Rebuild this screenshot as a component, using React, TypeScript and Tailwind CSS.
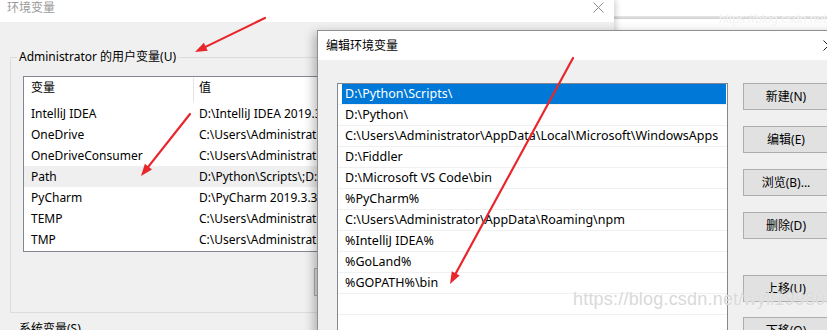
import React from 'react';

const userVars = [
  { name: 'IntelliJ IDEA', value: 'D:\\IntelliJ IDEA 2019.3.3\\bin;' },
  { name: 'OneDrive', value: 'C:\\Users\\Administrator\\OneDrive' },
  { name: 'OneDriveConsumer', value: 'C:\\Users\\Administrator\\OneDrive' },
  { name: 'Path', value: 'D:\\Python\\Scripts\\;D:\\Python\\;C:\\Users', active: true },
  { name: 'PyCharm', value: 'D:\\PyCharm 2019.3.3\\bin;' },
  { name: 'TEMP', value: 'C:\\Users\\Administrator\\AppData\\Local\\Temp' },
  { name: 'TMP', value: 'C:\\Users\\Administrator\\AppData\\Local\\Temp' },
];

const paths = [
  'D:\\Python\\Scripts\\',
  'D:\\Python\\',
  'C:\\Users\\Administrator\\AppData\\Local\\Microsoft\\WindowsApps',
  'D:\\Fiddler',
  'D:\\Microsoft VS Code\\bin',
  '%PyCharm%',
  'C:\\Users\\Administrator\\AppData\\Roaming\\npm',
  '%IntelliJ IDEA%',
  '%GoLand%',
  '%GOPATH%\\bin',
  '',
  '',
];

const font = 'font-["Noto_Sans","Noto_Sans_CJK_SC",sans-serif]';

function CloseIcon({ color }: { color: string }) {
  return (
    <svg width="11" height="11" viewBox="0 0 11 11">
      <path d="M0.5 0.5 L10.5 10.5 M10.5 0.5 L0.5 10.5" stroke={color} strokeWidth="1" fill="none" />
    </svg>
  );
}

function WinButton({ label, className = '' }: { label: string; className?: string }) {
  return (
    <div
      className={`flex h-[27px] w-[86px] shrink-0 items-center justify-center border border-[#adadad] bg-[#e1e1e1] text-[12px] text-black ${className}`}
    >
      {label}
    </div>
  );
}

// red annotation arrow: line + filled head at the end point
function Arrow({ x1, y1, x2, y2 }: { x1: number; y1: number; x2: number; y2: number }) {
  const dx = x2 - x1;
  const dy = y2 - y1;
  const len = Math.hypot(dx, dy);
  const ux = dx / len;
  const uy = dy / len;
  const bx = x2 - ux * 12;
  const by = y2 - uy * 12;
  const head = `${x2},${y2} ${bx - uy * 4.5},${by + ux * 4.5} ${bx + uy * 4.5},${by - ux * 4.5}`;
  return (
    <g>
      <line x1={x1} y1={y1} x2={bx + ux * 2} y2={by + uy * 2} stroke="#e8262b" strokeWidth="2.2" strokeLinecap="round" />
      <polygon points={head} fill="#e8262b" />
    </g>
  );
}

export default function App() {
  return (
    <div className={`relative h-[330px] w-[827px] overflow-hidden bg-white ${font}`}>
      {/* window further behind, top right */}
      <div className="absolute left-[614px] top-0 h-[30px] w-[213px] bg-white pt-[16px]">
        <div className="h-[3px] bg-gradient-to-b from-[#e6e6e6] to-[#cfcfcf]" />
      </div>

      {/* 环境变量 window */}
      <div className="absolute left-0 top-0 flex h-[330px] w-[614px] flex-col overflow-hidden bg-[#f0f0f0] shadow-[2px_0_6px_rgba(0,0,0,0.18)]">
        <div className="flex h-[22px] shrink-0 items-start justify-between bg-white pl-[7px] pr-[10px]">
          <span className="pt-[1px] text-[12px] leading-[14px] text-[#9a9a9a]">环境变量</span>
          <div className="pt-[2px]">
            <CloseIcon color="#8c8c8c" />
          </div>
        </div>

        <div className="shrink-0 pl-[10px] pt-[35px]">
          <div className="relative h-[256px] w-[594px] border border-[#dcdcdc]">
            <span className="absolute left-[6px] top-[-10px] bg-[#f0f0f0] px-[2px] text-[12px] leading-[18px] text-black">
              Administrator 的用户变量(U)
            </span>

            <div className="ml-[12px] mt-[18px] h-[176px] w-[420px] overflow-hidden border border-[#828790] bg-white text-[12px] text-black">
              <div className="flex h-[26px]">
                <div className="w-[169px] shrink-0 pl-[7px] pt-[3px] leading-[16px]">变量</div>
                <div className="my-[1px] w-px shrink-0 bg-[#e5e5e5]" />
                <div className="pl-[5px] pt-[3px] leading-[16px]">值</div>
              </div>
              {userVars.map((v) => (
                <div key={v.name} className={`flex h-[21px] items-center ${v.active ? 'bg-[#efefef]' : ''}`}>
                  <div className="w-[170px] shrink-0 whitespace-nowrap pl-[7px]">{v.name}</div>
                  <div className="shrink-0 whitespace-nowrap pl-[5px]">{v.value}</div>
                </div>
              ))}
            </div>

            <div className="ml-[303px] mt-[16px]">
              <WinButton label="新建(W)..." className="h-[28px] w-[75px]" />
            </div>
          </div>

          <div className="ml-[9px] mt-[8px] text-[12px] leading-[16px] text-black">系统变量(S)</div>
        </div>
      </div>

      {/* 编辑环境变量 dialog */}
      <div className="absolute left-[317px] top-[30px] flex h-[320px] w-[540px] flex-col border border-[#8f8f8f] bg-[#f0f0f0] shadow-[-3px_3px_10px_rgba(0,0,0,0.28)]">
        <div className="flex h-[29px] shrink-0 items-center justify-between bg-white pl-[8px] pr-[22px]">
          <span className="text-[12px] text-black">编辑环境变量</span>
          <CloseIcon color="#222" />
        </div>

        <div className="flex pl-[19px] pt-[23px]">
          <div className="h-[260px] w-[391px] shrink-0 overflow-hidden border border-[#828790] bg-white text-[12.5px]">
            {paths.map((p, i) => (
              <div key={i} className="flex h-[21px] border-b border-[#f0f0f0]">
                {i === 0 ? (
                  <div className="ml-[4px] mr-[1px] flex flex-1 items-center bg-[#0078d7] pl-[3px] text-white">
                    {p}
                  </div>
                ) : (
                  <div className="flex items-center whitespace-nowrap pl-[7px] text-black">{p}</div>
                )}
              </div>
            ))}
          </div>

          <div className="ml-[15px] flex flex-col">
            <WinButton label="新建(N)" />
            <WinButton label="编辑(E)" className="mt-[16px]" />
            <WinButton label="浏览(B)..." className="mt-[16px]" />
            <WinButton label="删除(D)" className="mt-[16px]" />
            <WinButton label="上移(U)" className="mt-[36px]" />
            <WinButton label="下移(O)" className="mt-[15px]" />
          </div>
        </div>
      </div>

      {/* watermarks */}
      <div className="absolute left-[573px] top-[288px] font-['Liberation_Sans',sans-serif] text-[18px] leading-[22px] tracking-[0.2px] text-[#d9d9d9] [text-shadow:0_0_1px_rgba(255,255,255,0.9)]">
        https://blog.csdn.net/wyll19980812
      </div>
      <div className="absolute left-[719px] top-[12px] font-['Liberation_Sans',sans-serif] text-[12px] leading-[14px] text-[#f2f2f2]">
        https://blog.csdn.net/w
      </div>

      {/* annotation arrows */}
      <svg className="pointer-events-none absolute left-0 top-0" width="827" height="330">
        <Arrow x1={265} y1={18} x2={195} y2={52} />
        <Arrow x1={190} y1={114} x2={141} y2={176} />
        <Arrow x1={573} y1={58} x2={450} y2={284} />
      </svg>
    </div>
  );
}
